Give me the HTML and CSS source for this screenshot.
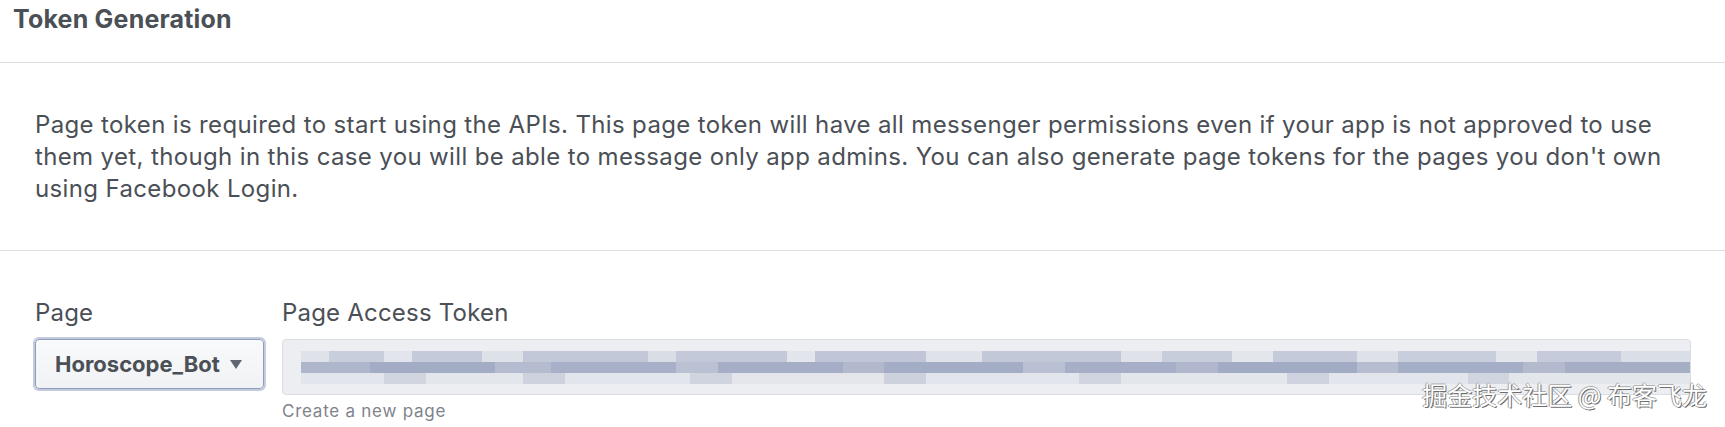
FILE: index.html
```html
<!DOCTYPE html>
<html lang="en">
<head>
    <meta charset="UTF-8">
    <meta name="viewport" content="width=device-width, initial-scale=1.0">
    <title>Token Generation</title>
    <link rel="stylesheet" href="styles.css">
</head>
<body>
    <div class="panel">
        <div class="panel-header">
            <h2>Token Generation</h2>
        </div>

        <div class="panel-intro">
            <p>Page token is required to start using the APIs. This page token will have all messenger permissions even if your app is not approved to use them yet, though in this case you will be able to message only app admins. You can also generate page tokens for the pages you don't own using Facebook Login.</p>
        </div>

        <div class="token-form">
            <div class="field field-page">
                <label>Page</label>
                <button class="page-select">
                    <span>Horoscope_Bot</span>
                    <span class="caret"></span>
                </button>
            </div>
            <div class="field field-token">
                <label>Page Access Token</label>
                <div class="token-input">
                    <div class="token-blur">
                        <div class="blur-row blur-top"></div>
                        <div class="blur-row blur-mid"></div>
                        <div class="blur-row blur-bottom"></div>
                    </div>
                </div>
                <a class="help-link" href="#">Create a new page</a>
            </div>
        </div>
    </div>

    <div class="watermark">掘金技术社区 @ 布客飞龙</div>
</body>
</html>
```

FILE: styles.css
```css
body {
    margin: 0;
    background: #fff;
    color: #4b4f56;
    font-family: Inter, "Liberation Sans", sans-serif;
    position: relative;
    min-height: 427px;
    overflow: hidden;
}

.panel-header {
    height: 62px;
    padding-left: 13px;
    border-bottom: 1px solid #dddfe2;
}

.panel-header h2 {
    margin: 0;
    padding-top: 4px;
    font-size: 25px;
    font-weight: 700;
    letter-spacing: 0.2px;
    line-height: 30px;
    color: #4b4f56;
}

.panel-intro {
    padding: 46px 34px 0 35px;
    height: 141px;
    border-bottom: 1px solid #dddfe2;
}

.panel-intro p {
    margin: 0;
    font-size: 24px;
    letter-spacing: 0.36px;
    line-height: 32px;
}

.token-form {
    display: flex;
    gap: 18px;
    padding: 47px 34px 0 35px;
}

.field label {
    display: block;
    font-size: 24px;
    letter-spacing: 0.2px;
    line-height: 29px;
    margin-bottom: 12px;
}

.field-page {
    width: 229px;
    flex: none;
}

.field-token {
    flex: 1;
}

.page-select {
    width: 229px;
    height: 50px;
    display: flex;
    align-items: center;
    gap: 10px;
    padding: 0 0 0 19px;
    border: 1px solid #8f9cbb;
    border-radius: 4px;
    box-shadow: 0 0 0 2px #c3cbdd;
    background: linear-gradient(#f9fafb, #f1f2f5);
    font-family: inherit;
    font-size: 22px;
    font-weight: 700;
    color: #4b4f56;
}

.caret {
    width: 0;
    height: 0;
    border-left: 6px solid transparent;
    border-right: 6px solid transparent;
    border-top: 9px solid #606770;
}

.token-input {
    height: 54px;
    border: 1px solid #dadde1;
    border-radius: 4px;
    background: #eceef2;
    display: flex;
    align-items: center;
    padding-left: 18px;
}

.token-blur {
    flex: 1;
    height: 33px;
    display: flex;
    flex-direction: column;
}

.blur-row {
    flex: 1;
}

.blur-top {
    background: linear-gradient(90deg,
        #dfe2e9 0 2%, #c8cedc 2% 6%, #e2e5eb 6% 8%, #c4cada 8% 13%, #dde1e8 13% 16%,
        #c2c8d8 16% 25%, #d9dde6 25% 27%, #c3c9d9 27% 35%, #e2e5eb 35% 37%,
        #c0c6d7 37% 45%, #dfe2e9 45% 49%, #c2c8d8 49% 59%, #dfe2e9 59% 62%,
        #c7cddb 62% 67%, #e3e6eb 67% 70%, #c4cada 70% 76%, #dee1e8 76% 79%,
        #c8cedb 79% 86%, #e2e5ea 86% 89%, #c5cbda 89% 95%, #dadee7 95% 100%);
}

.blur-mid {
    background: linear-gradient(90deg,
        #aeb6cb 0 5%, #a3acc5 5% 14%, #b5bcd0 14% 18%, #a7b0c8 18% 27%,
        #bac1d3 27% 30%, #a5aec6 30% 39%, #b2b9cd 39% 42%, #a4adc6 42% 52%,
        #b9c0d3 52% 55%, #a6afc7 55% 63%, #b0b7cc 63% 66%, #a2abc4 66% 76%,
        #b6bdd1 76% 79%, #a5aec7 79% 88%, #b3bace 88% 91%, #a6aec6 91% 100%);
}

.blur-bottom {
    background: linear-gradient(90deg,
        #e2e5eb 0 6%, #d0d5e0 6% 9%, #e3e6eb 9% 16%, #cdd2de 16% 19%,
        #e2e5eb 19% 28%, #cfd4df 28% 31%, #e4e6eb 31% 42%, #ccd1dd 42% 45%,
        #e2e5eb 45% 56%, #d1d5e0 56% 59%, #e3e6eb 59% 71%, #ced3df 71% 74%,
        #e2e5eb 74% 84%, #d0d5e0 84% 87%, #e3e6eb 87% 100%);
}

.help-link {
    display: block;
    margin-top: 6px;
    font-size: 17px;
    letter-spacing: 0.75px;
    line-height: 20px;
    color: #7f838b;
    text-decoration: none;
}

.watermark {
    position: absolute;
    right: 18px;
    bottom: 15px;
    font-family: "Noto Sans CJK SC", sans-serif;
    font-size: 25px;
    color: #fff;
    text-shadow: 1px 1px 0 #6d6d6d, -1px 0 0 #9a9a9a, 0 -1px 0 #b0b0b0;
}
```
